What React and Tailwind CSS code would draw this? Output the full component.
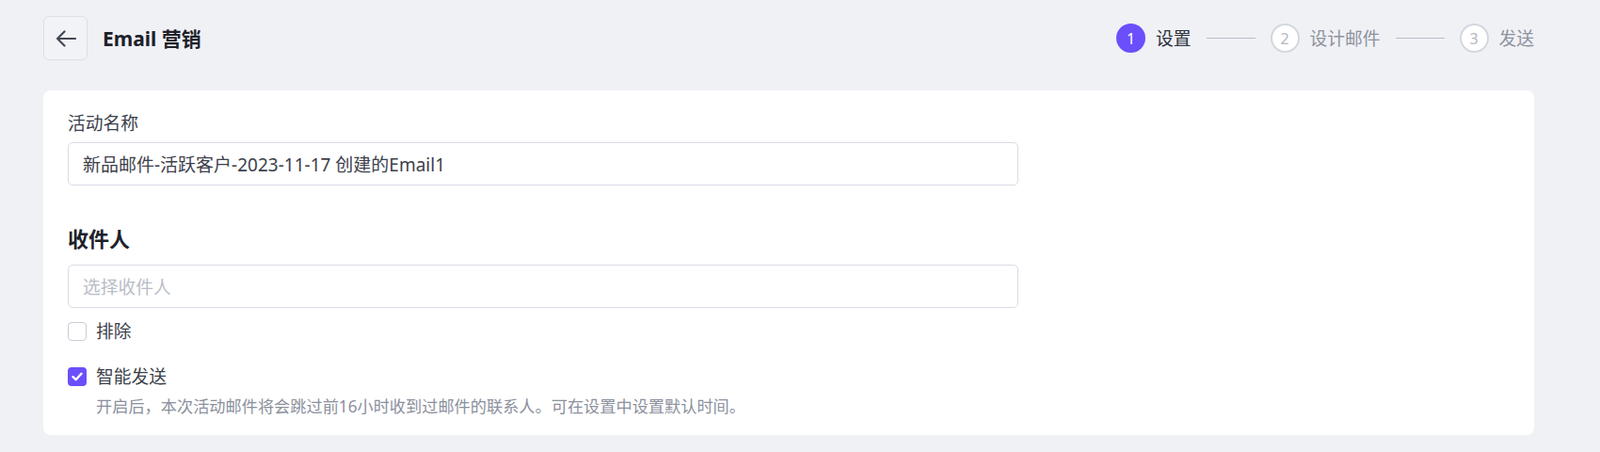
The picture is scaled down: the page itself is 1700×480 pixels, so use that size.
export default function App() {
  const steps = [
    { n: 1, label: "设置", active: true },
    { n: 2, label: "设计邮件" },
    { n: 3, label: "发送" },
  ];

  return (
    <div
      className="min-h-[480px] bg-[#f0f1f5] pl-[46px] pr-[70px] pt-[17px] pb-[17px]"
      style={{ fontFamily: '"Noto Sans", "Noto Sans CJK SC", sans-serif' }}
    >
      {/* Header */}
      <div className="flex h-[47px] items-center justify-between">
        <div className="flex items-center gap-[16px]">
          <button className="flex h-[47px] w-[47px] items-center justify-center rounded-[6px] border border-[#dcdfe7] bg-[#f2f3f7] text-[#434854]">
            <svg width="22" height="18" viewBox="0 0 22 18" fill="none">
              <path
                d="M21 9H2M9.5 1.5L2 9l7.5 7.5"
                stroke="currentColor"
                strokeWidth="2.2"
                strokeLinecap="round"
                strokeLinejoin="round"
              />
            </svg>
          </button>
          <h1 className="text-[21px] font-bold leading-[30px] text-[#1d2129]">Email 营销</h1>
        </div>

        {/* Stepper */}
        <div className="flex items-center">
          {steps.map((s, i) => (
            <div key={s.n} className="flex items-center">
              <div className="flex items-center gap-[11px]">
                <span
                  className={
                    s.active
                      ? "flex h-[31px] w-[31px] items-center justify-center rounded-full bg-[#6a4ffb] text-[16px] text-white"
                      : "flex h-[31px] w-[31px] items-center justify-center rounded-full border-2 border-[#d4d7df] bg-white text-[16px] text-[#b3b7c2]"
                  }
                >
                  {s.n}
                </span>
                <span
                  className={
                    s.active
                      ? "text-[18.75px] leading-[26px] text-[#2b2f3a]"
                      : "text-[18.75px] leading-[26px] text-[#8e929e]"
                  }
                >
                  {s.label}
                </span>
              </div>
              {i < steps.length - 1 && (
                <span className="mx-[16px] h-px w-[52px] bg-[#b9bdc9]" />
              )}
            </div>
          ))}
        </div>
      </div>

      {/* Card */}
      <div className="mt-[32px] rounded-lg bg-white pl-[26px] pt-[22px] pb-[18px]">
        <label className="block text-[18.75px] leading-[26px] text-[#3a3e49]">活动名称</label>
        <input
          readOnly
          defaultValue="新品邮件-活跃客户-2023-11-17 创建的Email1"
          className="mt-[7px] block h-[46px] w-[1010px] rounded-[5px] border border-[#d9dce6] px-[15px] text-[19px] text-[#3c404b] outline-none"
        />

        <h2 className="mt-[41px] text-[22px] font-bold leading-[30px] text-[#1d2129]">收件人</h2>
        <input
          readOnly
          placeholder="选择收件人"
          className="mt-[13px] block h-[46px] w-[1010px] rounded-[5px] border border-[#d9dce6] px-[15px] text-[18.75px] text-[#3c404b] outline-none placeholder:text-[#b9bdc7]"
        />

        <div className="mt-[13px] flex h-[24px] items-center gap-[10px]">
          <span className="h-[20px] w-[20px] rounded-[4px] border border-[#c9ccd6] bg-white" />
          <span className="text-[18.75px] leading-[24px] text-[#3b3f4a]">排除</span>
        </div>

        <div className="mt-[24px] flex h-[24px] items-center gap-[10px]">
          <span className="flex h-[20px] w-[20px] items-center justify-center rounded-[4px] bg-[#6a4ffb]">
            <svg width="12" height="10" viewBox="0 0 12 10" fill="none">
              <path
                d="M1.5 5.2L4.6 8.2L10.5 1.8"
                stroke="white"
                strokeWidth="2.4"
                strokeLinecap="round"
                strokeLinejoin="round"
              />
            </svg>
          </span>
          <span className="text-[18.75px] leading-[24px] text-[#3b3f4a]">智能发送</span>
        </div>
        <p className="mt-[8px] pl-[30px] text-[17.2px] leading-[24px] text-[#8b909c]">
          开启后，本次活动邮件将会跳过前16小时收到过邮件的联系人。可在设置中设置默认时间。
        </p>
      </div>
    </div>
  );
}
